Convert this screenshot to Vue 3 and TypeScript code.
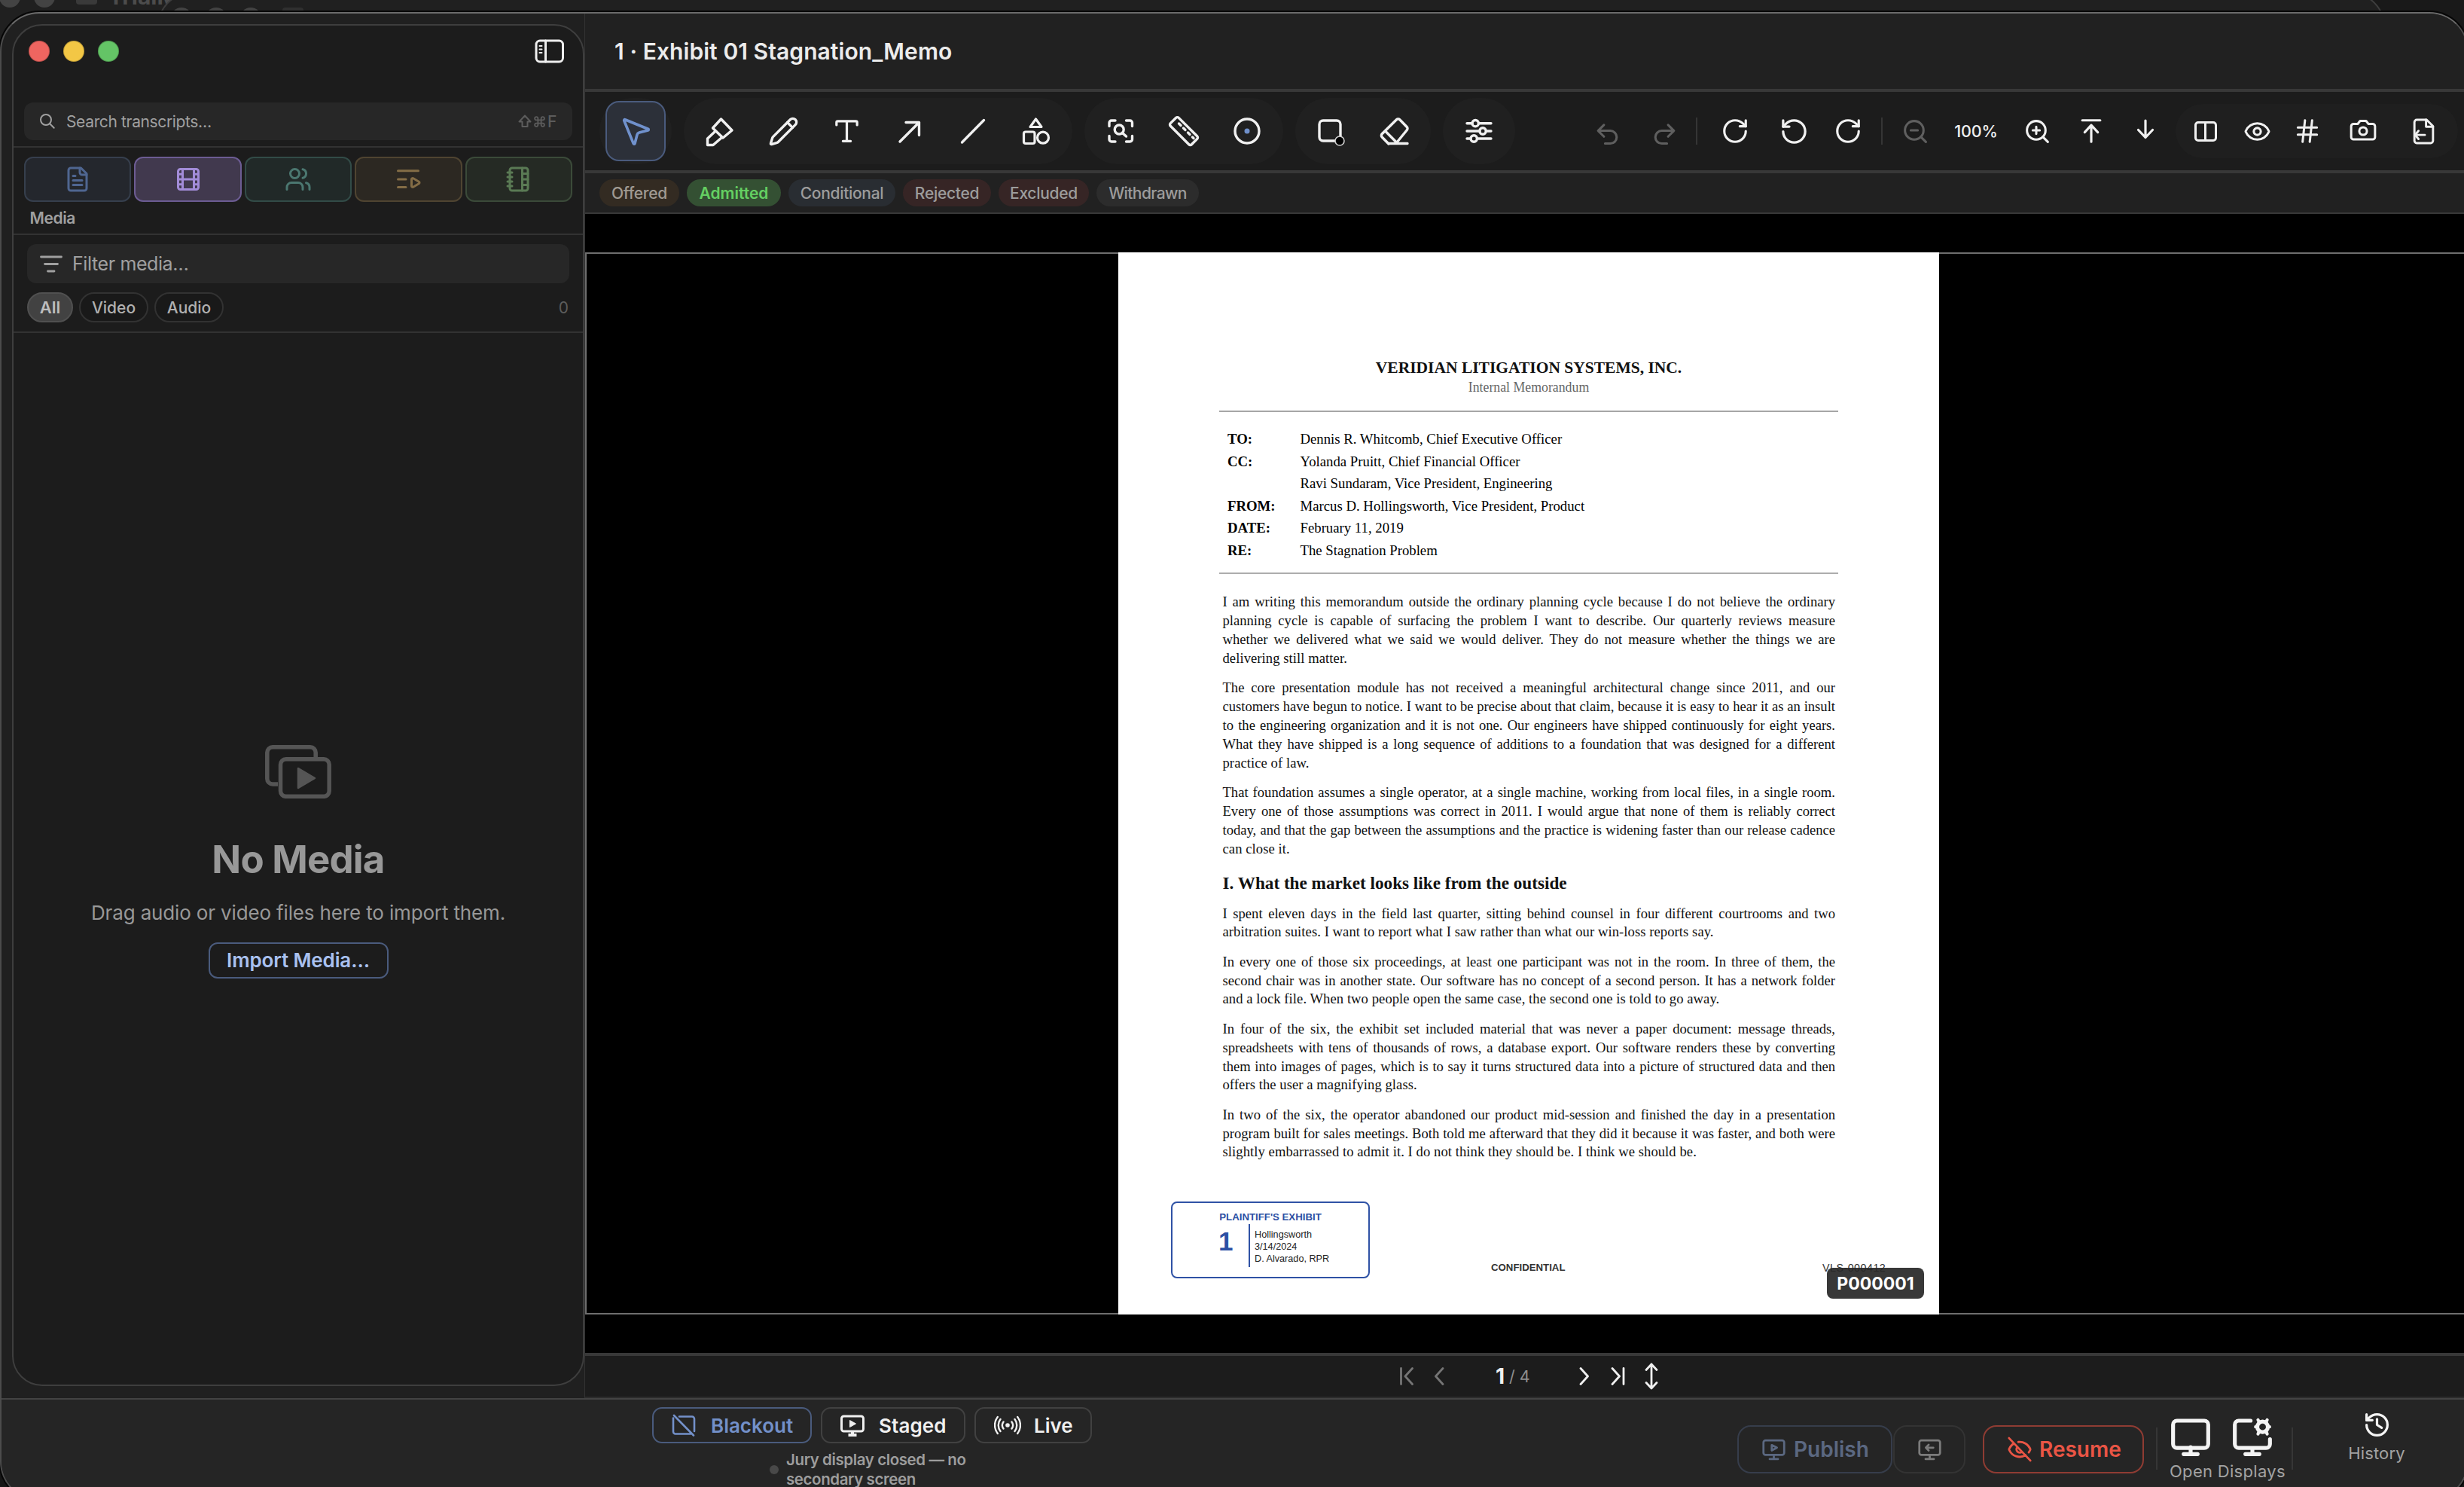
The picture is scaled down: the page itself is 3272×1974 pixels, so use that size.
<script setup lang="ts">
interface Icon {
  /** side of the square drawing box in px */
  size: number
  box: string
  stroke: number
  body: string
}

const wide = (body: string, stroke = 3.4): Icon => ({ size: 48, box: '0 0 48 48', stroke, body })
const grid = (size: number, body: string, stroke = 2, box = '0 0 24 24'): Icon => ({ size, box, stroke, body })

const icons: Record<string, Icon> = {
  pointer: grid(46, '<path d="M4.037 4.688a.495.495 0 0 1 .651-.651l16 6.5a.5.5 0 0 1-.063.947l-6.124 1.58a2 2 0 0 0-1.438 1.435l-1.579 6.126a.5.5 0 0 1-.947.063z"/>', 1.9),
  highlighter: wide('<path d="M25.5 8 40 23 28 33 14.5 20Z"/><path d="M17 25 7.5 34v8.5H15L26 33"/>'),
  pencil: grid(41, '<path d="M21.174 6.812a1 1 0 0 0-3.986-3.987L3.842 16.174a2 2 0 0 0-.5.83l-1.321 4.352a.5.5 0 0 0 .623.622l4.353-1.32a2 2 0 0 0 .83-.497z"/><path d="m15 5 4 4"/>'),
  type: grid(41, '<path d="M12 4v15.5M4 7V5a1 1 0 0 1 1-1h14a1 1 0 0 1 1 1v2M9 19.5h6"/>', 1.9),
  arrow: wide('<path d="M11 38 36.500 12.500M19 12.500H36.500V29.500"/>'),
  line: wide('<path d="M9.500 39 38.500 9.500"/>'),
  shapes: wide('<path d="M23.500 8 31 18.500H16Z"/><rect x="7.500" y="25" width="14.500" height="15.500" rx="2.500"/><circle cx="33" cy="32.700" r="7.500"/>', 3.2),
  scan: wide('<path d="M9 17.500V13a3 3 0 0 1 3-3H17M31.500 10H36.500a3 3 0 0 1 3 3V17.500M39.500 30.500V35a3 3 0 0 1-3 3H31.500M17 38H12a3 3 0 0 1-3-3V30.500"/><circle cx="22.200" cy="22" r="6"/><path d="m27 27 4.500 4"/>'),
  ruler: wide('<path d="M13.500 6.500 6.300 13.600a2.500 2.500 0 0 0 0 3.600L30.800 41.700a2.500 2.500 0 0 0 3.600 0L41.700 34.400a2.500 2.500 0 0 0 0-3.600L17.200 6.400a2.500 2.500 0 0 0-3.600 0Z"/><path d="m17.500 14 2.500 2.500M23.500 20l2.500 2.500M29.500 26l2.500 2.500M35.500 32l1.500 1.500"/>'),
  target: wide('<circle cx="24" cy="24" r="16"/><circle cx="24" cy="24" r="3.500" fill="#6f8fc9" stroke="none"/>'),
  redact: wide('<rect x="8" y="10" width="28" height="27" rx="5"/><circle cx="35" cy="37" r="6" fill="#000" stroke="#cfcfcf" stroke-width="1.600"/>'),
  eraser: wide('<path d="M16 41 7.200 32a3 3 0 0 1 0-4.200L26.500 8.800a3 3 0 0 1 4.200 0L40.200 18.500a3 3 0 0 1 0 4.200L26.500 39.500M16 40.500H41M11.500 24 25 37.500"/>'),
  sliders: wide('<path d="M8 13.700h7M23.500 13.700H40M8 24H25M33.500 24H40M8 34h5M21.500 34H40"/><circle cx="19.200" cy="13.700" r="4.200"/><circle cx="29" cy="24" r="4.200"/><circle cx="17.200" cy="34" r="4.200"/>'),
  undo: grid(37, '<path d="M9 14 4 9l5-5M4 9h10.500a5.500 5.500 0 0 1 0 11H10"/>', 2, '0 -2.400 24 24'),
  redo: grid(37, '<path d="m15 14 5-5-5-5M20 9H9.500a5.500 5.500 0 0 0 0 11H14"/>', 2, '0 -2.400 24 24'),
  cw: grid(38, '<path d="M21 12a9 9 0 1 1-9-9c2.520 0 4.930 1 6.740 2.740L21 8"/><path d="M21 3v5h-5"/>'),
  ccw: grid(39, '<path d="M3 12a9 9 0 1 0 9-9 9.750 9.750 0 0 0-6.740 2.740L3 8"/><path d="M3 3v5h5"/>'),
  zoomOut: grid(37, '<circle cx="11" cy="11" r="8"/><path d="m21 21-4.350-4.350M8 11h6"/>'),
  zoomIn: grid(37, '<circle cx="11" cy="11" r="8"/><path d="m21 21-4.350-4.350M11 8v6M8 11h6"/>'),
  toTop: grid(38, '<path d="M4.500 3h15M17.500 13 12 7l-5.500 6M12 7v14"/>'),
  down: wide('<path d="M24 10V32.500M14.500 22.500 24 32.500 33.500 22.500"/>', 3.2),
  columns: wide('<rect x="10.500" y="12.500" width="27" height="24" rx="3.500"/><path d="M23.500 12.500v24"/>', 3),
  eye: grid(37, '<path d="M2.062 12.348a1 1 0 0 1 0-.696 10.750 10.750 0 0 1 19.876 0 1 1 0 0 1 0 .696 10.750 10.750 0 0 1-19.876 0"/><circle cx="12" cy="12" r="3"/>'),
  hash: grid(38, '<path d="M4 9h16M4 15h16M10 3 8 21M16 3l-2 18"/>', 1.9),
  camera: grid(38, '<path d="M14.500 4.500h-5L7.500 7H4a2 2 0 0 0-2 2v9a2 2 0 0 0 2 2h16a2 2 0 0 0 2-2V9a2 2 0 0 0-2-2h-3.500z"/><circle cx="12" cy="13" r="3.200"/>', 1.9, '0 1 24 24'),
  fileOut: grid(37, '<path d="M14.500 2H6a2 2 0 0 0-2 2v16a2 2 0 0 0 2 2h12a2 2 0 0 0 2-2V7.500z"/><path d="M14 2v6h6M13 15H5M7.500 11.500 4.500 15l3 3.500"/>', 1.9),
  file: grid(36, '<path d="M15 2H6a2 2 0 0 0-2 2v16a2 2 0 0 0 2 2h12a2 2 0 0 0 2-2V7Z"/><path d="M14 2v4a2 2 0 0 0 2 2h4M10 9H8M16 13H8M16 17H8"/>'),
  film: grid(36, '<rect width="18" height="18" x="3" y="3" rx="2"/><path d="M7 3v18M3 7.500h4M3 12h18M3 16.500h4M17 3v18M17 7.500h4M17 16.500h4"/>'),
  users: grid(36, '<path d="M16 21v-2a4 4 0 0 0-4-4H6a4 4 0 0 0-4 4v2"/><circle cx="9" cy="7" r="4"/><path d="M22 21v-2a4 4 0 0 0-3-3.870M16 3.130a4 4 0 0 1 0 7.750"/>'),
  playlist: grid(36, '<path d="M21 4.500H3M10 12H3M10 19H3M15 12.003a1 1 0 0 1 1.517-.859l4.997 2.997a1 1 0 0 1 0 1.718l-4.997 2.997a1 1 0 0 1-1.517-.860z"/>'),
  notebook: grid(36, '<path d="M2 6h4M2 10h4M2 14h4M2 18h4"/><rect width="16" height="20" x="4" y="2" rx="2"/><path d="M15 2v20M15 7h5M15 12h5M15 17h5"/>'),
  monitor: grid(56, '<rect width="20" height="15.500" x="2" y="3" rx="2.200"/><path d="M8 22h8M12 18v4"/>', 2.200),
  monitorCog: grid(56, '<path d="M12 18.500v3.500M8 22h8M22 13.500v2.800a2.200 2.200 0 0 1-2.200 2.200H4.200A2.200 2.200 0 0 1 2 16.300V5.200A2.200 2.200 0 0 1 4.200 3H11"/><circle cx="17.800" cy="6.500" r="3"/><path d="m15.200 2.500.9 1.800M20.400 2.500l-.9 1.800M15.200 10.500l.9-1.800M20.400 10.500l-.9-1.800M13.800 6.500h1M20.800 6.500h1" stroke-width="1.800"/>', 2.200),
  monitorPlay: grid(33, '<rect x="2" y="3" width="20" height="14" rx="2"/><path d="M10 7.500 15 10l-5 2.700zM12 17v4M8 21h8"/>'),
  monitorBack: grid(33, '<rect x="2" y="3" width="20" height="14" rx="2"/><path d="M15.500 10h-7M11 7.200 8.300 10l2.700 2.800M12 17v4M8 21h8"/>'),
  eyeOff: grid(34, '<path d="M10.700 5.100a10.700 10.700 0 0 1 11.200 6.600 1 1 0 0 1 0 .7 10.700 10.700 0 0 1-1.400 2.500M17.500 17.500A10.700 10.700 0 0 1 2.100 12.300a1 1 0 0 1 0-.7A10.700 10.700 0 0 1 6.500 6.500M14.100 14.200a3 3 0 0 1-4.200-4.300M2 1.500l20 21"/>'),
  history: grid(37, '<path d="M3 12a9 9 0 1 0 9-9 9.750 9.750 0 0 0-6.740 2.740L3 8"/><path d="M3 3v5h5M12 7v5l4 2.500"/>', 2.100),
}

const toolGroups: string[][] = [
  ['highlighter', 'pencil', 'type', 'arrow', 'line', 'shapes'],
  ['scan', 'ruler', 'target'],
  ['redact', 'eraser'],
  ['sliders'],
]

const viewTools: { icon: string; width: number }[] = [
  { icon: 'columns', width: 70 },
  { icon: 'eye', width: 66 },
  { icon: 'hash', width: 68 },
  { icon: 'camera', width: 80 },
  { icon: 'fileOut', width: 80 },
]

const statuses = [
  { label: 'Offered', tone: 'amber', width: 106 },
  { label: 'Admitted', tone: 'green', width: 125 },
  { label: 'Conditional', tone: 'blue', width: 142 },
  { label: 'Rejected', tone: 'red', width: 117 },
  { label: 'Excluded', tone: 'red', width: 120 },
  { label: 'Withdrawn', tone: 'gray', width: 136 },
]

const tabs = [
  { icon: 'file', tone: 't-blue' },
  { icon: 'film', tone: 't-purple' },
  { icon: 'users', tone: 't-teal' },
  { icon: 'playlist', tone: 't-gold' },
  { icon: 'notebook', tone: 't-olive' },
]

const header = [
  ['TO:', 'Dennis R. Whitcomb, Chief Executive Officer'],
  ['CC:', 'Yolanda Pruitt, Chief Financial Officer'],
  ['', 'Ravi Sundaram, Vice President, Engineering'],
  ['FROM:', 'Marcus D. Hollingsworth, Vice President, Product'],
  ['DATE:', 'February 11, 2019'],
  ['RE:', 'The Stagnation Problem'],
]

const opening: string[][] = [
  [
    'I am writing this memorandum outside the ordinary planning cycle because I do not believe the ordinary',
    'planning cycle is capable of surfacing the problem I want to describe. Our quarterly reviews measure',
    'whether we delivered what we said we would deliver. They do not measure whether the things we are',
    'delivering still matter.',
  ],
  [
    'The core presentation module has not received a meaningful architectural change since 2011, and our',
    'customers have begun to notice. I want to be precise about that claim, because it is easy to hear it as an insult',
    'to the engineering organization and it is not one. Our engineers have shipped continuously for eight years.',
    'What they have shipped is a long sequence of additions to a foundation that was designed for a different',
    'practice of law.',
  ],
  [
    'That foundation assumes a single operator, at a single machine, working from local files, in a single room.',
    'Every one of those assumptions was correct in 2011. I would argue that none of them is reliably correct',
    'today, and that the gap between the assumptions and the practice is widening faster than our release cadence',
    'can close it.',
  ],
]

const market: string[][] = [
  [
    'I spent eleven days in the field last quarter, sitting behind counsel in four different courtrooms and two',
    'arbitration suites. I want to report what I saw rather than what our win-loss reports say.',
  ],
  [
    'In every one of those six proceedings, at least one participant was not in the room. In three of them, the',
    'second chair was in another state. Our software has no concept of a second person. It has a network folder',
    'and a lock file. When two people open the same case, the second one is told to go away.',
  ],
  [
    'In four of the six, the exhibit set included material that was never a paper document: message threads,',
    'spreadsheets with tens of thousands of rows, a database export. Our software renders these by converting',
    'them into images of pages, which is to say it turns structured data into a picture of structured data and then',
    'offers the user a magnifying glass.',
  ],
  [
    'In two of the six, the operator abandoned our product mid-session and finished the day in a presentation',
    'program built for sales meetings. Both told me afterward that they did it because it was faster, and both were',
    'slightly embarrassed to admit it. I do not think they should be. I think we should be.',
  ],
]

const attrs = (name: string) => {
  const i = icons[name]
  return { width: i.size, height: i.size, viewBox: i.box, 'stroke-width': i.stroke, innerHTML: i.body }
}
</script>

<template>
  <div class="desktop">
    <div class="behind">
      <div class="ghost-bar">
        <i class="ghost-dot first"></i><i class="ghost-dot"></i>
        <i class="ghost-folder"></i><span class="ghost-title">TrialM</span>
      </div>
      <div class="ghost-window">
        <i class="ghost-dot"></i><i class="ghost-dot"></i><i class="ghost-dot"></i><i class="ghost-folder"></i>
      </div>
    </div>

    <div class="window">
      <div class="content">
        <aside class="panel">
          <div class="panel-top">
            <div class="lights"><i class="r"></i><i class="y"></i><i class="g"></i></div>
            <svg class="sidebar-icon" width="40" height="32" viewBox="0 0 40 32" fill="none" stroke="currentColor" stroke-width="3" stroke-linecap="round">
              <rect x="2" y="2" width="35.500" height="28" rx="5" /><path d="M14.500 2v28" /><path d="M6.500 9h3M6.500 13.500h3M6.500 18h3" stroke-width="2" />
            </svg>
          </div>
          <div class="search">
            <svg width="22" height="22" viewBox="0 0 22 22" fill="none" stroke="currentColor" stroke-width="2" stroke-linecap="round"><circle cx="9" cy="9" r="7" /><path d="m14.200 14.200 5.500 5.500" /></svg>
            <span>Search transcripts…</span>
            <svg class="shift" width="18" height="18" viewBox="0 0 18 18" fill="none" stroke="currentColor" stroke-width="2" stroke-linejoin="round"><path d="M9 1.500 16.500 9.500H12.500V16H5.500V9.500H1.500Z" /></svg>
            <svg width="17" height="17" viewBox="0 0 24 24" fill="none" stroke="currentColor" stroke-width="2.600"><path d="M15 6v12a3 3 0 1 0 3-3H6a3 3 0 1 0 3 3V6a3 3 0 1 0-3 3h12a3 3 0 1 0-3-3" /></svg>
            <b>F</b>
          </div>
          <div class="tabs">
            <div v-for="t in tabs" :key="t.icon" class="tab" :class="t.tone"><svg class="ic" v-bind="attrs(t.icon)"></svg></div>
          </div>
          <div class="section">Media</div>
          <div class="filter-area">
            <div class="filter">
              <svg width="30" height="24" viewBox="0 0 30 24" fill="none" stroke="currentColor" stroke-width="2.800" stroke-linecap="round"><path d="M1.500 3h27M6.500 12.500h17M10.500 22h8.500" /></svg>
              <span>Filter media…</span>
            </div>
            <div class="pills">
              <span class="pill on">All</span><span class="pill">Video</span><span class="pill">Audio</span><span class="count">0</span>
            </div>
          </div>
          <div class="empty">
            <svg width="88" height="71" viewBox="0 0 88 71" fill="none" stroke="currentColor" stroke-width="5.500">
              <path d="M17 52H10a7.200 7.200 0 0 1-7.200-7.200V10A7.200 7.200 0 0 1 10 2.800H60A7.200 7.200 0 0 1 67.200 10V17" />
              <rect x="20.500" y="18.800" width="64.700" height="49.500" rx="7.200" />
              <path d="M44 31v26L66 44Z" fill="currentColor" stroke-width="2.500" stroke-linejoin="round" />
            </svg>
            <h2>No Media</h2>
            <p>Drag audio or video files here to import them.</p>
            <button>Import Media…</button>
          </div>
        </aside>

        <main class="main">
          <div class="title">1 · Exhibit 01 Stagnation_Memo</div>
          <div class="toolbar">
            <div class="group"><div class="cell active"><svg class="ic" v-bind="attrs('pointer')"></svg></div></div>
            <div v-for="(g, n) in toolGroups" :key="n" class="group">
              <div v-for="name in g" :key="name" class="cell"><svg class="ic" v-bind="attrs(name)"></svg></div>
            </div>
            <div class="right">
              <div class="rc dim w76"><svg class="ic" v-bind="attrs('undo')"></svg></div>
              <div class="rc dim w76"><svg class="ic" v-bind="attrs('redo')"></svg></div>
              <i class="vr a"></i>
              <div class="rc w76"><svg class="ic" v-bind="attrs('cw')"></svg></div>
              <div class="rc w80"><svg class="ic" v-bind="attrs('ccw')"></svg></div>
              <div class="rc w64"><svg class="ic" v-bind="attrs('cw')"></svg></div>
              <i class="vr b"></i>
              <div class="rc dim w72"><svg class="ic" v-bind="attrs('zoomOut')"></svg></div>
              <div class="rc pct">100%</div>
              <div class="rc w72"><svg class="ic" v-bind="attrs('zoomIn')"></svg></div>
              <div class="rc w72"><svg class="ic" v-bind="attrs('toTop')"></svg></div>
              <div class="rc w72"><svg class="ic" v-bind="attrs('down')"></svg></div>
              <div class="views">
                <div v-for="v in viewTools" :key="v.icon" class="rc" :style="{ width: v.width + 'px' }"><svg class="ic" v-bind="attrs(v.icon)"></svg></div>
              </div>
            </div>
          </div>
          <div class="statuses">
            <span v-for="s in statuses" :key="s.label" class="chip" :class="s.tone" :style="{ width: s.width + 'px' }">{{ s.label }}</span>
          </div>
          <div class="stage">
            <div class="frame">
              <article class="page">
                <div class="company">VERIDIAN LITIGATION SYSTEMS, INC.</div>
                <div class="kind">Internal Memorandum</div>
                <div class="meta">
                  <div v-for="(r, n) in header" :key="n" class="row"><b>{{ r[0] }}</b><span>{{ r[1] }}</span></div>
                </div>
                <div class="text">
                  <p v-for="(p, n) in opening" :key="n"><span v-for="l in p" :key="l">{{ l }}</span></p>
                  <h3>I. What the market looks like from the outside</h3>
                  <p v-for="(p, n) in market" :key="n"><span v-for="l in p" :key="l">{{ l }}</span></p>
                </div>
                <div class="stamp">
                  <div class="stamp-title">PLAINTIFF'S EXHIBIT</div>
                  <div class="stamp-row">
                    <div class="stamp-no">1</div>
                    <div class="stamp-lines">Hollingsworth<br />3/14/2024<br />D. Alvarado, RPR</div>
                  </div>
                </div>
                <div class="confidential">CONFIDENTIAL</div>
                <div class="bates">VLS-000412</div>
                <div class="badge">P000001</div>
              </article>
            </div>
          </div>
          <div class="pager">
            <svg class="off" width="18" height="24" viewBox="0 0 18 24"><path d="M1.500 1.500v21M16.500 1.500 7 12l9.500 10.500" /></svg>
            <svg class="off p2" width="14" height="24" viewBox="0 0 14 24"><path d="M12 1.500 2.500 12 12 22.500" /></svg>
            <b>1</b><span>/ 4</span>
            <svg class="p3" width="14" height="24" viewBox="0 0 14 24"><path d="M2 1.500 11.500 12 2 22.500" /></svg>
            <svg class="p4" width="19" height="24" viewBox="0 0 19 24"><path d="M2 1.500 11.500 12 2 22.500M17 1.500v21" /></svg>
            <svg class="p5" width="18" height="36" viewBox="0 0 18 36"><path d="M9 2v32M2 9.500 9 2l7 7.500M2 26.500 9 34l7-7.500" /></svg>
          </div>
        </main>
      </div>

      <footer class="bar">
        <div class="modes">
          <div class="mode-row">
            <div class="mode blackout">
              <svg width="32" height="30" viewBox="0 0 32 30" fill="none" stroke="currentColor" stroke-width="2.600" stroke-linecap="round"><path d="M10 3.500h17a3 3 0 0 1 3 3V23M25 26.500H5a3 3 0 0 1-3-3V5.500M3 2 29 28.500" /></svg>
              <span>Blackout</span>
            </div>
            <div class="mode staged">
              <svg width="32" height="29" viewBox="0 0 32 29" fill="none" stroke="currentColor" stroke-width="3"><rect x="1.500" y="2" width="29" height="20" rx="3" /><path d="M12.500 7.500v9L20.500 12Z" fill="currentColor" stroke-width="1" /><path d="M10.500 27h11M16 22v5" stroke-width="4" /></svg>
              <span>Staged</span>
            </div>
            <div class="mode live">
              <svg width="36" height="26" viewBox="0 0 36 26" fill="none" stroke="currentColor" stroke-width="2.400" stroke-linecap="round"><circle cx="18" cy="13" r="2.800" fill="currentColor" stroke="none" /><path d="M12.500 8.500a7.500 7.500 0 0 0 0 9M23.500 8.500a7.500 7.500 0 0 1 0 9M8.500 5a13 13 0 0 0 0 16M27.500 5a13 13 0 0 1 0 16M4.800 2a18 18 0 0 0 0 22M31.200 2a18 18 0 0 1 0 22" /></svg>
              <span>Live</span>
            </div>
          </div>
          <div class="jury"><i></i><span>Jury display closed — no<br />secondary screen</span></div>
        </div>
        <div class="actions">
          <div class="act publish"><svg class="ic" v-bind="attrs('monitorPlay')"></svg><span>Publish</span></div>
          <div class="act back"><svg class="ic" v-bind="attrs('monitorBack')"></svg></div>
          <div class="act resume"><svg class="ic" v-bind="attrs('eyeOff')"></svg><span>Resume</span></div>
          <i class="rule"></i>
          <div class="displays">
            <div><svg class="ic" v-bind="attrs('monitor')"></svg><svg class="ic" v-bind="attrs('monitorCog')"></svg></div>
            <span>Open Displays</span>
          </div>
          <i class="rule"></i>
          <div class="history"><svg class="ic" v-bind="attrs('history')"></svg><span>History</span></div>
        </div>
      </footer>
    </div>
  </div>
</template>

<style>
body { background: #161616; }
</style>

<style scoped>
* { box-sizing: border-box; margin: 0; }
.desktop { position: relative; width: 3272px; height: 1974px; overflow: hidden; background: #161616; font-family: Inter, "Liberation Sans", sans-serif; color: #f0f0f0; padding-top: 16px; white-space: nowrap; }
.ic { fill: none; stroke: currentColor; stroke-linecap: round; stroke-linejoin: round; display: block; flex: none; }

/* windows peeking out above the front one */
.behind { position: absolute; inset: 0 0 auto 0; height: 80px; background: #191919; overflow: hidden; }
.ghost-bar { display: flex; height: 60px; width: 300px; background: #202020; }
.ghost-bar .ghost-dot { margin: -18px 18px 0 0; }
.ghost-bar .ghost-dot.first { margin-left: -1px; }
.ghost-dot { width: 28px; height: 28px; border-radius: 50%; background: #434343; flex: none; }
.ghost-folder { width: 28px; height: 22px; border-radius: 4px; background: #3a3a3a; margin: -16px 0 0 10px; }
.ghost-title { font-weight: 700; font-size: 30px; line-height: 30px; color: #4c4c4c; margin: -20px 0 0 15px; }
.ghost-window { position: absolute; left: 209px; top: -10px; width: 2958px; height: 90px; border: 2px solid #3d3d3d; border-radius: 52px; background: #202020; display: flex; padding: 18px 0 0 16px; gap: 18px; }
.ghost-window .ghost-folder { margin: 0 0 0 10px; background: #303030; }

.window { position: relative; width: 3278px; height: 1976px; background: #202020; border: 2px solid #4c4c4c; border-top-color: #6b6b6b; border-radius: 52px; overflow: hidden; box-shadow: 0 0 0 2px #060606; }
.content { display: flex; height: 1838px; }

.panel { width: 760px; height: 1808px; margin: 14px 0 0 14px; border: 2px solid #3e3e3e; border-radius: 40px; background: #1c1c1c; flex: none; display: flex; flex-direction: column; overflow: hidden; color: #a0a0a0; }
.panel-top { display: flex; justify-content: space-between; padding: 18px 24px 0 20px; height: 102px; }
.lights { display: flex; gap: 18px; padding-top: 2px; }
.lights i { width: 28px; height: 28px; border-radius: 50%; border: 1px solid #0003; }
.lights .r { background: #ee6560; }
.lights .y { background: #f3c745; }
.lights .g { background: #64c466; }
.sidebar-icon { color: #eee; }
.search { margin: 0 14px; height: 50px; border-radius: 12px; background: #272727; display: flex; align-items: center; padding: 0 21px 0 20px; font-size: 21px; letter-spacing: -.36px; }
.search span { margin: 0 auto 0 14px; }
.search .shift { margin-right: 2px; }
.search .shift, .search .shift ~ * { color: #5c5c5c; }
.search b { font-weight: 500; margin-left: 2px; }
.tabs { margin-top: 8px; border-top: 2px solid #323232; padding: 12px 14px 0; display: flex; gap: 4px; height: 74px; }
.tab { flex: 1; height: 60px; border: 2px solid; border-radius: 12px; display: flex; align-items: center; justify-content: center; }
.t-blue { background: #24272d; border-color: #363f4d; color: #4f6691; }
.t-purple { background: #41394e; border-color: #6c5c93; color: #a28cd8; }
.t-teal { background: #212928; border-color: #324b47; color: #4b7770; }
.t-gold { background: #2c2822; border-color: #4f4431; color: #846d46; }
.t-olive { background: #252a24; border-color: #3b4a39; color: #5a7a54; }
.section { height: 42px; line-height: 43px; padding-left: 21.5px; font-weight: 600; font-size: 21px; letter-spacing: -.4px; }
.filter-area { border-top: 2px solid #323232; border-bottom: 2px solid #323232; height: 132px; padding: 12px 18px 0; }
.filter { height: 52px; border-radius: 12px; background: #272727; display: flex; align-items: center; gap: 13px; padding-left: 17px; font-size: 25px; letter-spacing: -.4px; }
.pills { display: flex; gap: 8px; margin-top: 12px; align-items: center; }
.pill { height: 40px; width: 92px; border: 2px solid #323232; border-radius: 20px; display: flex; align-items: center; justify-content: center; font-weight: 500; font-size: 21px; background: #191919; color: #b0b0b0; }
.pill.on { width: 61px; background: #424242; border-color: #505050; font-weight: 600; font-size: 22px; color: #bdbdbd; }
.count { margin-left: auto; color: #5c5c5c; font-size: 21px; padding-right: 1px; }
.empty { flex: 1; display: flex; flex-direction: column; align-items: center; padding-top: 547px; }
.empty svg { color: #555; }
.empty h2 { margin-top: 49px; font-size: 51px; line-height: 64px; letter-spacing: -.8px; color: #989898; }
.empty p { font-size: 26px; letter-spacing: -.15px; line-height: 40px; margin-top: 19px; color: #989898; }
.empty button { margin-top: 19px; width: 239px; height: 48px; border: 2px solid #4a5b7d; border-radius: 12px; background: transparent; color: #a9c1f0; font: 600 26px/44px Inter, sans-serif; letter-spacing: -.12px; padding: 0; }

.main { flex: 1; display: flex; flex-direction: column; border-left: 1px solid #333; }
.title { height: 100px; display: flex; align-items: center; padding-left: 39px; font-weight: 600; font-size: 30px; letter-spacing: .07px; color: #ececec; background: #212121; }
.toolbar { height: 112px; border-top: 4px solid #383838; border-bottom: 4px solid #383838; background: #1c1c1c; display: flex; align-items: center; gap: 16px; padding-left: 19px; }
.group { height: 88px; border-radius: 44px; background: #202020; display: flex; align-items: center; padding: 0 6px; }
.cell { width: 84px; height: 80px; display: flex; align-items: center; justify-content: center; }
.cell.active { width: 80px; margin: 0 2px; border: 2px solid #4a5b7d; border-radius: 18px; background: #2c3039; color: #7091cc; }
.right { margin-left: auto; display: flex; align-items: center; padding-right: 12px; }
.rc { display: flex; align-items: center; justify-content: center; flex: none; }
.dim { color: #5f5f5f; }
.w76 { width: 76px; } .w80 { width: 80px; } .w72 { width: 72px; } .w64 { width: 64px; }
.vr { width: 2px; height: 36px; background: #353535; }
.vr.a { margin: 0 12px 0 4px; }
.vr.b { margin: 0 7px 0 12px; }
.pct { width: 90px; font-weight: 500; font-size: 21.5px; letter-spacing: -.1px; }
.views { margin-left: 4px; height: 72px; border-radius: 36px; background: #1f1f1f; display: flex; align-items: center; padding: 0 6px 0 5px; }
.statuses { height: 54px; border-bottom: 2px solid #383838; display: flex; gap: 10px; padding: 8px 0 0 19px; background: #212121; }
.chip { height: 36px; border-radius: 18px; display: flex; align-items: center; justify-content: center; font-weight: 500; font-size: 21px; letter-spacing: -.3px; color: #9c9c9c; }
.chip.amber { background: #332b22; color: #a09a92; }
.chip.green { background: #345033; color: #64cf62; font-weight: 600; letter-spacing: 0; }
.chip.blue { background: #292d32; }
.chip.red { background: #362525; }
.chip.gray { background: #2c2c2c; letter-spacing: -.6px; }
.stage { height: 1512px; background: #000; padding-top: 51px; }
.frame { height: 1410px; border: 2px solid #6e6e6e; border-right: 0; }
.page { position: relative; width: 1090px; height: 1410px; margin: -2px 0 0 706px; background: #fff; color: #111; font-family: "Liberation Serif", serif; padding-top: 140px; }
.company { text-align: center; font-weight: 700; font-size: 21.5px; line-height: 26px; }
.kind { text-align: center; font-size: 17.8px; line-height: 24px; margin-top: 1px; color: #666; }
.meta { margin: 19px 134px 0; border-top: 2px solid #a6a6a6; border-bottom: 2px solid #adadad; padding: 21px 0 14.500px 11px; font-size: 18.75px; line-height: 29.6px; color: #000; }
.row { display: flex; height: 29.6px; }
.row b { width: 96.5px; }
.text { margin: 25px 138px 0 138.5px; font-size: 18.6px; line-height: 24.93px; }
.text p { margin-bottom: 14.25px; }
.text p span { display: block; text-align: justify; text-align-last: justify; height: 24.93px; }
.text p span:last-child { text-align-last: left; letter-spacing: .07px; }
.text h3 { font-size: 23.2px; line-height: 28px; margin: 18px 0 15px; }
.stamp { position: absolute; left: 70px; top: 1260px; width: 264px; height: 102px; border: 2.500px solid #2f52a5; border-radius: 8px; font-family: "Liberation Sans", sans-serif; color: #2c4fa3; }
.stamp-title { font-weight: 700; font-size: 13.24px; line-height: 16px; text-align: center; margin: 11px 0 1px; }
.stamp-row { display: flex; padding-left: 61px; }
.stamp-no { font-weight: 700; font-size: 35px; line-height: 46px; width: 42px; height: 57px; border-right: 2px solid #2f52a5; }
.stamp-lines { color: #222; font-size: 12.66px; line-height: 16px; padding: 6px 0 0 6px; }
.confidential, .bates { position: absolute; font: 700 13.24px/16px "Liberation Sans", sans-serif; color: #333; top: 1340px; left: 495px; }
.bates { font-weight: 400; font-size: 14.25px; letter-spacing: .5px; left: 935px; }
.badge { position: absolute; left: 941px; top: 1348px; width: 129px; height: 41px; border-radius: 8px; background: #262626ea; color: #fff; font: 700 23px/42px Inter, sans-serif; text-align: center; }
.pager { height: 60px; border-top: 4px solid #383838; border-bottom: 2px solid #2c2c2c; background: #1c1c1c; display: flex; align-items: center; padding-left: 1082px; }
.pager svg { fill: none; stroke: currentColor; stroke-width: 2.800; stroke-linecap: round; stroke-linejoin: round; }
.pager .off { color: #757575; }
.p2 { margin-left: 27px; }
.pager b { font-size: 28px; margin-left: 68px; }
.pager span { font-size: 21.5px; color: #8e8e8e; margin-left: 6px; width: 30px; }
.p3 { margin-left: 63px; }
.p4 { margin-left: 28px; }
.p5 { margin-left: 26px; }

.bar { height: 134px; border-top: 2px solid #434343; background: #252525; display: flex; }
.modes { margin: 10px 0 0 864px; }
.mode-row { display: flex; gap: 12px; }
.mode { height: 48px; border: 2px solid #414141; border-radius: 13px; display: flex; align-items: center; font-weight: 600; font-size: 26px; padding-left: 24px; }
.blackout { width: 212px; border-color: #4a5b7d; color: #7390c9; gap: 20px; }
.staged { width: 192px; gap: 19px; letter-spacing: .1px; padding-left: 24px; }
.live { width: 156px; gap: 17px; }
.jury { display: flex; align-items: center; gap: 10px; margin: 9px 0 0 156px; color: #9d9d9d; font-weight: 600; font-size: 20.5px; line-height: 25.5px; letter-spacing: -.4px; }
.jury i { width: 12px; height: 12px; border-radius: 50%; background: #494949; }
.actions { margin-left: auto; display: flex; padding: 34px 80px 0 0; align-items: flex-start; }
.act { height: 64px; border: 2px solid; border-radius: 18px; display: flex; align-items: center; font-weight: 600; font-size: 28px; }
.publish { width: 206px; color: #5b6881; border-color: #363d4b; padding-left: 30px; gap: 10px; }
.back { width: 96px; margin-left: 1px; color: #7c7c7c; border-color: #333; justify-content: center; }
.resume { width: 214px; margin-left: 23px; color: #ea5545; border-color: #8f3c33; padding-left: 30px; gap: 9px; }
.rule { width: 2px; height: 56px; background: #363636; margin-top: 3px; }
.resume + .rule { margin-left: 16px; }
.displays { width: 151px; margin: -13px 11px 0 16px; color: #a3a3a3; font-size: 22px; letter-spacing: .3px; line-height: 28px; text-align: center; }
.displays div { display: flex; justify-content: space-between; color: #f4f4f4; padding: 0 13px 0 0; margin-bottom: 4px; }
.displays span { display: block; }
.history { margin: -19px 0 0 71px; width: 80px; color: #a3a3a3; font-size: 22px; letter-spacing: .15px; line-height: 28px; display: flex; flex-direction: column; align-items: center; gap: 5px; }
.history svg { color: #f4f4f4; }
</style>
